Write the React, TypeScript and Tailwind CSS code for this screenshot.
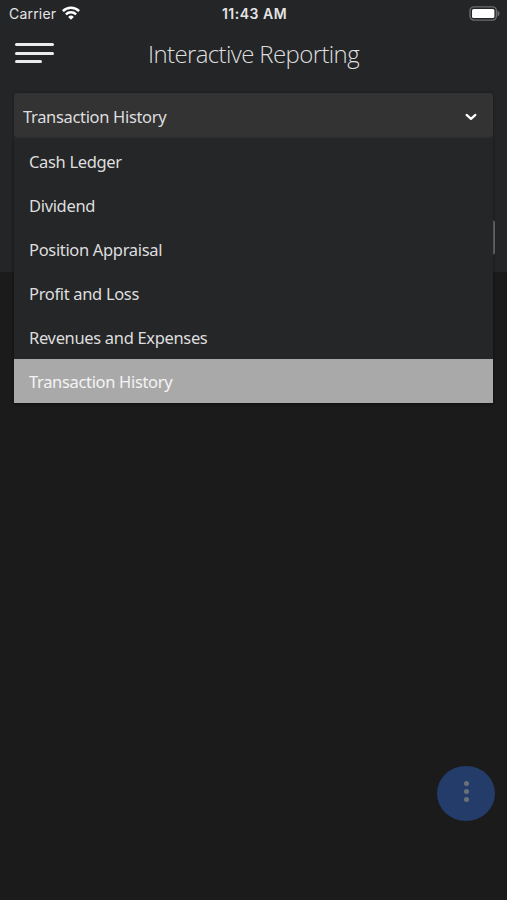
import { useState } from "react"

const reports = [
  "Cash Ledger",
  "Dividend",
  "Position Appraisal",
  "Profit and Loss",
  "Revenues and Expenses",
  "Transaction History",
]

function StatusBar() {
  return (
    <div className="grid h-7 grid-cols-3 items-center pb-[2px] pl-[9px] pr-[7px] font-['Inter','Liberation_Sans',sans-serif] text-[14px] text-[#e4e4e5]">
      <div className="flex items-center gap-[6px]">
        <span className="tracking-[0.2px]">Carrier</span>
        <svg className="h-[14px] w-[18px]" viewBox="0 0 18 14" fill="none" stroke="#fff" strokeWidth="2.5">
          <path d="M0.9 5.1a11.6 11.6 0 0 1 16.2 0" />
          <path d="M3.9 8.4a7.3 7.3 0 0 1 10.2 0" />
          <path d="M9 13.8 6.200 10.900a4 4 0 0 1 5.600 0z" fill="#fff" stroke="none" />
        </svg>
      </div>
      <span className="text-center text-[14px] font-semibold tracking-[0.5px]">11:43 AM</span>
      <svg className="h-[15px] w-[31px] justify-self-end" viewBox="0 0 31 15">
        <rect x="1" y="0.9" width="26.4" height="13.2" rx="4" fill="#242527" stroke="#6b6c6e" strokeWidth="1.4" />
        <rect x="3" y="3" width="22.4" height="9" rx="1.6" fill="#fff" />
        <path d="M28.5 4.500v6c1.200-.5 2-1.700 2-3s-.8-2.500-2-3z" fill="#6b6c6e" />
      </svg>
    </div>
  )
}

function Header() {
  return (
    <header className="relative flex h-[52px] items-center justify-center">
      <button className="absolute left-[15px] top-[15px] flex flex-col gap-[5.5px]" aria-label="Menu">
        <span className="h-[3px] w-[39px] rounded-full bg-[#ececed]"></span>
        <span className="h-[3px] w-[39px] rounded-full bg-[#ececed]"></span>
        <span className="h-[3px] w-[27px] rounded-full bg-[#ececed]"></span>
      </button>
      <h1 className="font-['Open_Sans','Noto_Sans',sans-serif] text-[24px] font-light tracking-[-0.62px] text-[#dededf]">
        Interactive Reporting
      </h1>
    </header>
  )
}

export default function App() {
  const [selected, setSelected] = useState("Transaction History")

  return (
    <div className="relative h-[900px] w-full overflow-hidden bg-[#1b1b1b] font-['Noto_Sans','Open_Sans',sans-serif] text-[16.5px] tracking-[-0.33px] text-[#dededf]">
      <div className="h-[272px] bg-[#242527]">
        <StatusBar />
        <Header />

        <div className="relative mx-[14px] mt-[13px]">
          <button className="flex h-[45px] w-full items-center justify-between rounded-[3px] bg-[#333333] pl-[9px] pr-4 pt-[3px] tracking-[-0.33px] shadow-[0_0_3px_rgba(0,0,0,0.35)]">
            <span>{selected}</span>
            <svg className="h-3 w-3" viewBox="0 0 12 12" fill="none" stroke="#fff" strokeWidth="2.2" strokeLinecap="round" strokeLinejoin="round">
              <path d="M1.600 3.900 6 7.900 10.400 3.900" />
            </svg>
          </button>

          {/* Edge of the input behind the open list */}
          <div className="absolute -right-[2px] top-[127px] h-[35px] w-2 rounded-[3px] bg-[#6a6a6b]"></div>

          <ul className="absolute inset-x-0 top-[45px] z-10 bg-[#252628] pt-[1px] shadow-[0_1px_3px_rgba(0,0,0,0.5)]">
            {reports.map((report) => (
              <li
                key={report}
                onClick={() => setSelected(report)}
                className={`flex h-11 cursor-pointer items-center pl-[15px] pt-[3px] ${
                  report === selected ? "bg-[#a9a9a9] text-[#f4f4f4]" : ""
                }`}
              >
                {report}
              </li>
            ))}
          </ul>
        </div>
      </div>

      <button
        className="absolute bottom-[79px] right-3 flex h-[55px] w-[58px] flex-col items-center justify-center gap-[3px] rounded-[50%] bg-[#243c6a] pb-[5px] pl-[1px]"
        aria-label="More"
      >
        <span className="size-[5px] rounded-full bg-[#6c7079]"></span>
        <span className="size-[5px] rounded-full bg-[#6c7079]"></span>
        <span className="size-[5px] rounded-full bg-[#6c7079]"></span>
      </button>
    </div>
  )
}
